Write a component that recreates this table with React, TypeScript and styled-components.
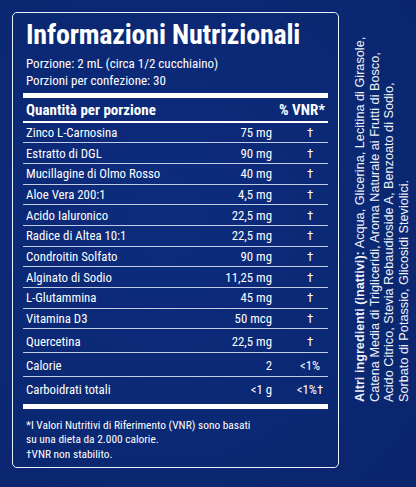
import styled, { createGlobalStyle } from 'styled-components';

const GlobalStyle = createGlobalStyle`
  html, body {
    margin: 0;
    padding: 0;
    background: #0c2976;
  }
`;

const condensed = `"Roboto Condensed", "Liberation Sans Narrow", Roboto, "Liberation Sans", sans-serif`;

export const Page = styled.main`
  display: flex;
  align-items: flex-start;

  width: 416px;
  height: 487px;
  overflow: hidden;

  color: #fff;
  font-family: ${condensed};
  font-stretch: condensed;
  background: radial-gradient(ellipse at 40% 45%, #0d2c7d 0%, #0b2874 60%, #0a256c 100%);
`;

export const Panel = styled.section`
  box-sizing: border-box;
  width: 327px;
  height: 456px;
  margin: 12px 0 0 12px;
  padding: 6px 10px 0;

  border: 1.5px solid #eef1f8;
  border-radius: 5px;

  h1 {
    margin: 0 0 0 3px;
    font-size: 28px;
    font-weight: 700;
    line-height: 32px;
    letter-spacing: -0.2px;
  }
`;

export const Serving = styled.p`
  margin: 4px 0 0 3px;
  font-size: 13px;
  line-height: 17px;
`;

export const ThickBar = styled.div`
  height: 5px;
  margin-top: 4px;
  background: #fff;
`;

export const Table = styled.div`
  display: flex;
  flex-direction: column;
`;

export const Row = styled.div<{ $head?: boolean; $height?: number }>`
  display: grid;
  grid-template-columns: 1fr 90px 56px;
  align-items: end;

  box-sizing: border-box;
  height: ${(p) => (p.$head ? 24.5 : p.$height ?? 20.7)}px;
  padding-left: 3px;
  padding-bottom: ${(p) => (p.$head ? 0 : p.$height ? 1 : 0)}px;

  font-size: ${(p) => (p.$head ? '15px' : '12.8px')};
  font-weight: ${(p) => (p.$head ? 700 : 400)};
  line-height: ${(p) => (p.$head ? '22px' : '19.2px')};
  border-bottom: ${(p) => (p.$head ? '2.5px solid #fff' : '1.5px solid rgba(214, 221, 240, 0.9)')};

  &:last-child {
    border-bottom: none;
  }

  .amount {
    text-align: right;
  }

  .vnr {
    padding-left: 20px;
    text-align: center;
  }

  .vnrHead {
    grid-column: 2 / 4;
    padding-right: 3px;
    text-align: right;
  }
`;

export const Footnote = styled.p`
  margin: 9px 0 0 3px;
  font-size: 11.4px;
  line-height: 14.5px;
`;

export const Ingredients = styled.aside`
  box-sizing: border-box;
  height: 368px;
  margin: 34px 0 0 14px;

  writing-mode: vertical-rl;
  transform: rotate(180deg);
  white-space: nowrap;

  color: #eef1f8;
  font-family: "Liberation Sans", Arial, sans-serif;
  font-size: 12.7px;
  line-height: 14.7px;

  b {
    font-weight: 700;
  }
`;

type Nutrient = {
  name: string,
  amount: string,
  vnr: string,
  height?: number
};

const nutrients: Array<Nutrient> = [
  { name: 'Zinco L-Carnosina', amount: '75 mg', vnr: '†' },
  { name: 'Estratto di DGL', amount: '90 mg', vnr: '†' },
  { name: 'Mucillagine di Olmo Rosso', amount: '40 mg', vnr: '†' },
  { name: 'Aloe Vera 200:1', amount: '4,5 mg', vnr: '†' },
  { name: 'Acido Ialuronico', amount: '22,5 mg', vnr: '†' },
  { name: 'Radice di Altea 10:1', amount: '22,5 mg', vnr: '†' },
  { name: 'Condroitin Solfato', amount: '90 mg', vnr: '†' },
  { name: 'Alginato di Sodio', amount: '11,25 mg', vnr: '†' },
  { name: 'L-Glutammina', amount: '45 mg', vnr: '†' },
  { name: 'Vitamina D3', amount: '50 mcg', vnr: '†' },
  { name: 'Quercetina', amount: '22,5 mg', vnr: '†', height: 24 },
  { name: 'Calorie', amount: '2', vnr: '<1%', height: 23.5 },
  { name: 'Carboidrati totali', amount: '<1 g', vnr: '<1%†', height: 23 },
];

export default function App() {
  return (
    <>
      <GlobalStyle />
      <Page>
        <Panel>
          <h1>Informazioni Nutrizionali</h1>
          <Serving>
            Porzione: 2 mL (circa 1/2 cucchiaino)<br />
            Porzioni per confezione: 30
          </Serving>
          <ThickBar />
          <Table>
            <Row $head>
              <span>Quantità per porzione</span>
              <span className="vnrHead">% VNR*</span>
            </Row>
            {nutrients.map((n) => (
              <Row key={n.name} $height={n.height}>
                <span>{n.name}</span>
                <span className="amount">{n.amount}</span>
                <span className="vnr">{n.vnr}</span>
              </Row>
            ))}
          </Table>
          <ThickBar />
          <Footnote>
            *I Valori Nutritivi di Riferimento (VNR) sono basati<br />
            su una dieta da 2.000 calorie.<br />
            †VNR non stabilito.
          </Footnote>
        </Panel>
        <Ingredients>
          <b>Altri ingredienti (inattivi):</b> Acqua, Glicerina, Lecitina di Girasole,<br />
          Catena Media di Trigliceridi, Aroma Naturale ai Frutti di Bosco,<br />
          Acido Citrico, Stevia Rebaudioside A, Benzoato di Sodio,<br />
          Sorbato di Potassio, Glicosidi Steviolici.
        </Ingredients>
      </Page>
    </>
  );
}
